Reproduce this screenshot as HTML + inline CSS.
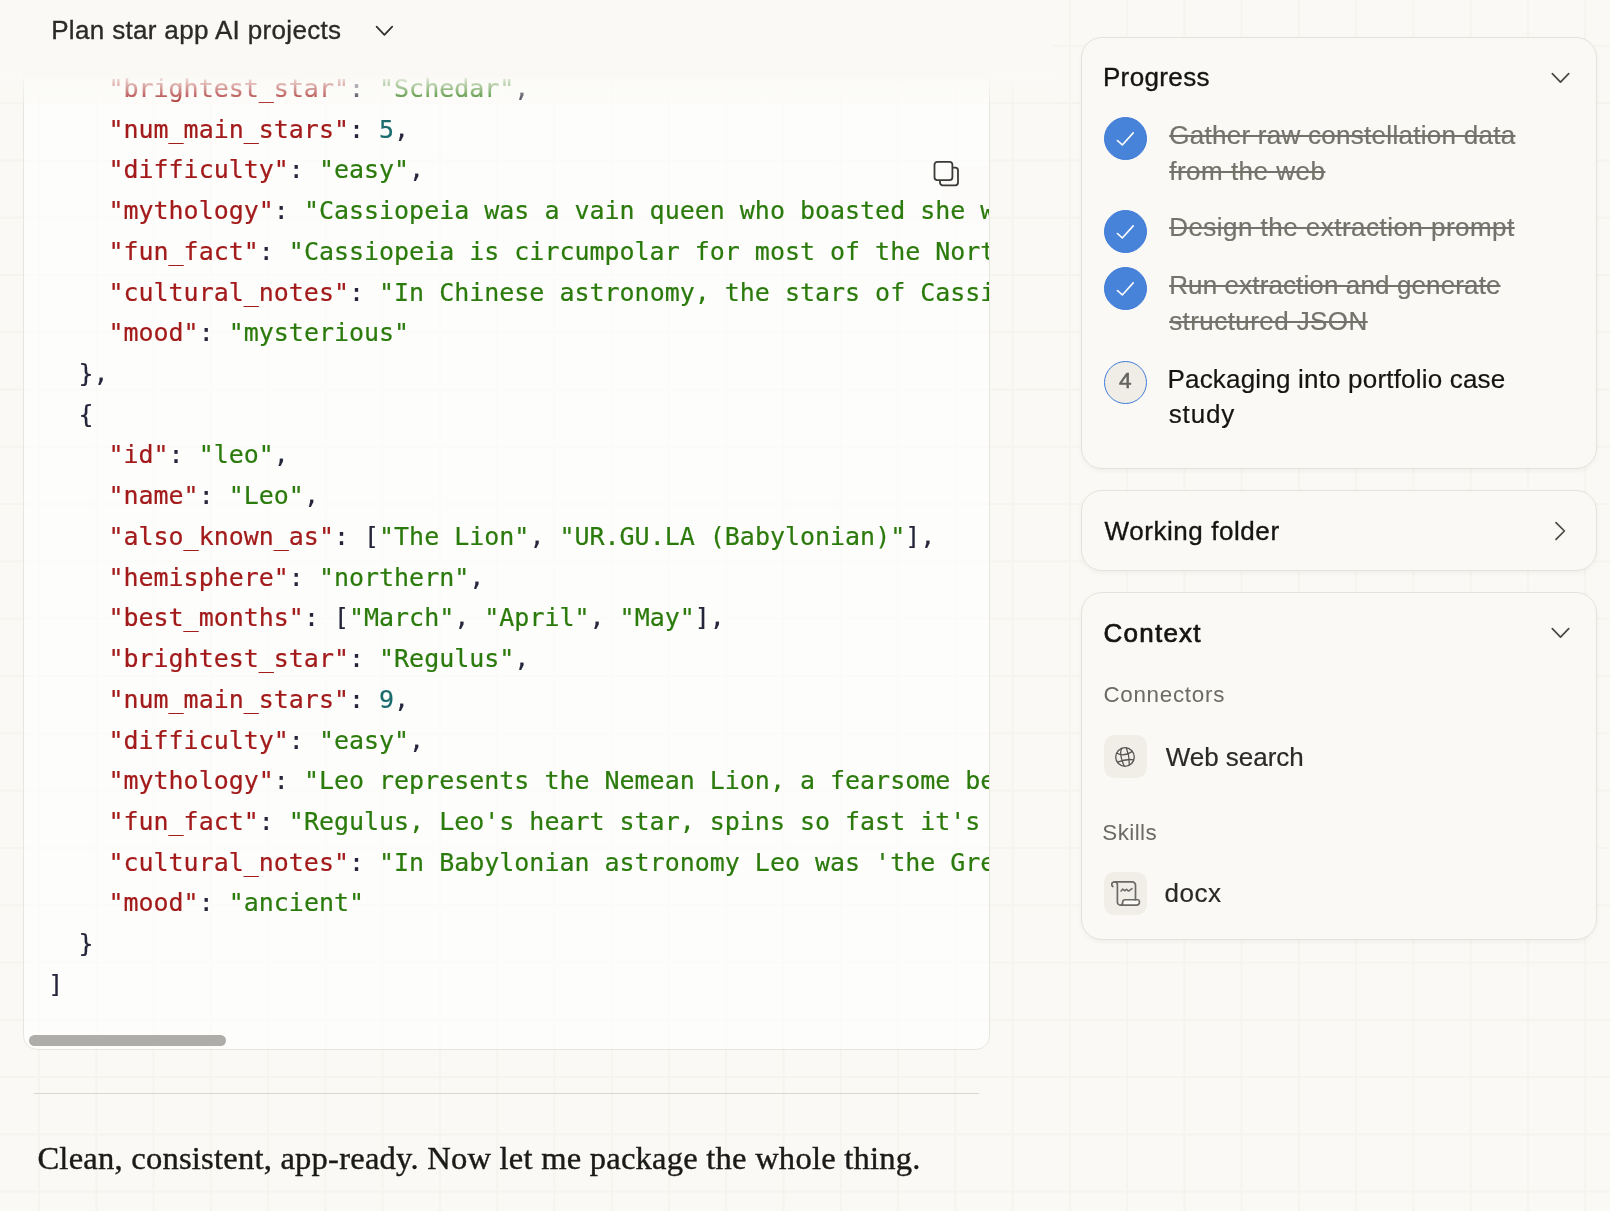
<!DOCTYPE html>
<html lang="en">
<head>
<meta charset="utf-8">
<title>Plan star app AI projects</title>
<style>
*{box-sizing:border-box;margin:0;padding:0}
html,body{width:1610px;height:1211px;overflow:hidden}
body{
  position:relative;
  background-color:#faf9f5;
  background-image:
    linear-gradient(to right,#f5f4ee 0,#f5f4ee 1.6px,transparent 1.6px),
    linear-gradient(to bottom,#f5f4ee 0,#f5f4ee 1.6px,transparent 1.6px);
  background-size:57.28px 57.3px;
  background-position:38.1px 44.75px;
  font-family:"Liberation Sans",sans-serif;
  color:#141413;
  -webkit-font-smoothing:antialiased;
}
.abs{position:absolute}
.t{position:absolute;white-space:nowrap}
#root{position:absolute;left:0;top:0;width:1610px;height:1211px;will-change:transform}

/* ---------- code block ---------- */
#code{
  position:absolute;left:23px;top:20px;width:967px;height:1030px;
  border:1.3px solid #e6e5e0;border-radius:14px;
  background:rgba(255,255,255,.62);
  overflow:hidden;
}
#code pre{
  position:absolute;left:24.3px;top:48px;
  font-family:"DejaVu Sans Mono","Liberation Mono",monospace;
  font-size:24.98px;line-height:40.72px;
  color:#24253a;
  white-space:pre;
  -webkit-text-stroke-width:.22px;
}
.k{color:#a21a1a}
.s{color:#2b7a0c}
.n{color:#1a6b6e}
.p{color:#24253a}
#sb{position:absolute;left:29.4px;top:1035.2px;width:197px;height:10.6px;border-radius:6px;background:#aeadaa}
#copybtn{position:absolute;left:918px;top:145px;width:57px;height:57px;border-radius:11px;background:#fcfbf9}
#copy{position:absolute;left:930px;top:157px;width:32px;height:32px}

/* ---------- header ---------- */
#hdr{position:absolute;left:0;top:0;width:1053px;height:73.6px;background:#faf9f5}
#hdrfade{position:absolute;left:0;top:73.6px;width:1053px;height:33px;background:linear-gradient(to bottom,#faf9f5 0%,rgba(250,249,245,0) 100%)}
#title{left:52px;top:12.2px;font-size:26px;line-height:36px;color:#2a2a27;-webkit-text-stroke:.35px #2a2a27}

/* ---------- bottom ---------- */
#hr{position:absolute;left:34px;top:1092.8px;width:945px;height:1.6px;background:#d9d7d0}
#msg{left:37.5px;top:1135.2px;font-family:"Liberation Serif",serif;font-size:32.6px;line-height:46px;color:#1a1a18;-webkit-text-stroke:.4px #1a1a18}

/* ---------- right cards ---------- */
.card{position:absolute;left:1081.3px;width:516.2px;border:1.5px solid #e3e2dc;border-radius:21px;background:#faf9f5;
  box-shadow:0 2px 5px rgba(0,0,0,.045)}
.h{font-size:26px;line-height:36px;color:#141413;-webkit-text-stroke:.35px #141413}
.body{font-size:26px;line-height:35.8px;-webkit-text-stroke-width:.2px}
.done{color:#74736b;text-decoration:line-through;text-decoration-thickness:1.6px}
.lbl{font-size:22.4px;line-height:30px;color:#6b6a64}
.ck{position:absolute;left:1103.8px;width:43px;height:43px;border-radius:50%;background:#4783d9;border:1.6px solid #3d7ad8}
.ck svg{position:absolute;left:-1.6px;top:-1.6px;width:43px;height:43px}
.num{position:absolute;left:1103.8px;width:43px;height:43px;border-radius:50%;background:#efede5;border:1.9px solid #3f7bd9;
  font-size:22.6px;color:#656460;-webkit-text-stroke:.55px #656460;text-align:center;line-height:38.6px}
.ib{position:absolute;left:1103.8px;width:43px;height:43px;border-radius:10.5px;background:#f0eee7}
.chev{position:absolute}
#title{letter-spacing:0.336px;margin-left:-0.82px}
#t_progress{letter-spacing:0.374px;margin-left:-1.49px}
#t_g1{letter-spacing:0.279px;margin-left:-0.23px}
#t_g2{letter-spacing:0.497px;margin-left:-0.23px}
#t_d1{letter-spacing:0.469px;margin-left:-0.23px}
#t_r1{letter-spacing:0.122px;margin-left:-0.23px}
#t_r2{letter-spacing:0.424px;margin-left:-0.23px}
#t_p1{letter-spacing:0.189px;margin-left:-1.91px}
#t_p2{letter-spacing:0.888px;margin-left:-0.76px}
#t_wf{letter-spacing:0.568px;margin-left:0.14px}
#t_ctx{letter-spacing:1.232px;margin-left:-0.82px}
#t_conn{letter-spacing:0.715px;margin-left:-0.81px}
#t_web{letter-spacing:-0.034px;margin-left:0.41px}
#t_sk{letter-spacing:0.405px;margin-left:-1.88px}
#t_docx{letter-spacing:0.508px;margin-left:-0.64px}
#msg{letter-spacing:0.217px;margin-left:-0.08px}
</style>
</head>
<body>
<div id="root">

<!-- code block -->
<div id="code">
<div id="copybtn"></div>
<pre>    <span class="k">"brightest_star"</span><span class="p">: </span><span class="s">"Schedar"</span><span class="p">,</span>
    <span class="k">"num_main_stars"</span><span class="p">: </span><span class="n">5</span><span class="p">,</span>
    <span class="k">"difficulty"</span><span class="p">: </span><span class="s">"easy"</span><span class="p">,</span>
    <span class="k">"mythology"</span><span class="p">: </span><span class="s">"Cassiopeia was a vain queen who boasted she was more beautiful than the Nereids, angering Poseidon."</span><span class="p">,</span>
    <span class="k">"fun_fact"</span><span class="p">: </span><span class="s">"Cassiopeia is circumpolar for most of the Northern Hemisphere, so it never sets below the horizon."</span><span class="p">,</span>
    <span class="k">"cultural_notes"</span><span class="p">: </span><span class="s">"In Chinese astronomy, the stars of Cassiopeia are split among several asterisms."</span><span class="p">,</span>
    <span class="k">"mood"</span><span class="p">: </span><span class="s">"mysterious"</span>
  <span class="p">},</span>
  <span class="p">{</span>
    <span class="k">"id"</span><span class="p">: </span><span class="s">"leo"</span><span class="p">,</span>
    <span class="k">"name"</span><span class="p">: </span><span class="s">"Leo"</span><span class="p">,</span>
    <span class="k">"also_known_as"</span><span class="p">: [</span><span class="s">"The Lion"</span><span class="p">, </span><span class="s">"UR.GU.LA (Babylonian)"</span><span class="p">],</span>
    <span class="k">"hemisphere"</span><span class="p">: </span><span class="s">"northern"</span><span class="p">,</span>
    <span class="k">"best_months"</span><span class="p">: [</span><span class="s">"March"</span><span class="p">, </span><span class="s">"April"</span><span class="p">, </span><span class="s">"May"</span><span class="p">],</span>
    <span class="k">"brightest_star"</span><span class="p">: </span><span class="s">"Regulus"</span><span class="p">,</span>
    <span class="k">"num_main_stars"</span><span class="p">: </span><span class="n">9</span><span class="p">,</span>
    <span class="k">"difficulty"</span><span class="p">: </span><span class="s">"easy"</span><span class="p">,</span>
    <span class="k">"mythology"</span><span class="p">: </span><span class="s">"Leo represents the Nemean Lion, a fearsome beast slain by Heracles as the first of his labours."</span><span class="p">,</span>
    <span class="k">"fun_fact"</span><span class="p">: </span><span class="s">"Regulus, Leo's heart star, spins so fast it's flattened into an oblate shape."</span><span class="p">,</span>
    <span class="k">"cultural_notes"</span><span class="p">: </span><span class="s">"In Babylonian astronomy Leo was 'the Great Lion', UR.GU.LA."</span><span class="p">,</span>
    <span class="k">"mood"</span><span class="p">: </span><span class="s">"ancient"</span>
  <span class="p">}</span>
<span class="p">]</span></pre>
</div>
<svg id="copy" viewBox="0 0 32 32" fill="none" stroke="#3a3a36" stroke-width="1.8" stroke-linejoin="round" stroke-linecap="round">
  <path d="M10 24 v1.6 a2.7 2.7 0 0 0 2.7 2.7 h12.6 a2.7 2.7 0 0 0 2.7 -2.7 v-12.2 a2.7 2.7 0 0 0 -2.7 -2.7 h-2.3"/>
  <rect x="4.5" y="4.8" width="17.9" height="18.4" rx="2.9"/>
</svg>
<div id="sb"></div>

<!-- header -->
<div id="hdr"></div>
<div id="hdrfade"></div>
<div id="title" class="t">Plan star app AI projects</div>
<svg class="chev" style="left:374px;top:22px;width:21px;height:18px" viewBox="0 0 21 18" fill="none" stroke="#2f2f2c" stroke-width="1.7" stroke-linecap="round" stroke-linejoin="round"><path d="M2.6 4.6 L10.4 12.8 L18.2 4.6"/></svg>

<!-- bottom -->
<div id="hr"></div>
<div id="msg" class="t">Clean, consistent, app-ready. Now let me package the whole thing.</div>

<!-- Progress card -->
<div class="card" style="top:36.95px;height:432px"></div>
<div class="t h" id="t_progress" style="left:1104.4px;top:59.1px">Progress</div>
<svg class="chev" style="left:1550px;top:68.5px;width:21px;height:18px" viewBox="0 0 21 18" fill="none" stroke="#4a4944" stroke-width="1.7" stroke-linecap="round" stroke-linejoin="round"><path d="M2.3 4.6 L10.5 13.2 L18.7 4.6"/></svg>

<div class="ck" style="top:117.3px"><svg viewBox="0 0 43 43" fill="none" stroke="#fff" stroke-width="1.6" stroke-linecap="round" stroke-linejoin="round"><path d="M14.4 23.5 L19.3 27.95 L30.2 15.85"/></svg></div>
<div class="t body done" id="t_g1" style="left:1169.4px;top:118.2px">Gather raw constellation data</div>
<div class="t body done" id="t_g2" style="left:1169.4px;top:153.5px">from the web</div>

<div class="ck" style="top:210.2px"><svg viewBox="0 0 43 43" fill="none" stroke="#fff" stroke-width="1.6" stroke-linecap="round" stroke-linejoin="round"><path d="M14.4 23.5 L19.3 27.95 L30.2 15.85"/></svg></div>
<div class="t body done" id="t_d1" style="left:1169.4px;top:210.1px">Design the extraction prompt</div>

<div class="ck" style="top:267.4px"><svg viewBox="0 0 43 43" fill="none" stroke="#fff" stroke-width="1.6" stroke-linecap="round" stroke-linejoin="round"><path d="M14.4 23.5 L19.3 27.95 L30.2 15.85"/></svg></div>
<div class="t body done" id="t_r1" style="left:1169.4px;top:267.5px">Run extraction and generate</div>
<div class="t body done" id="t_r2" style="left:1169.4px;top:303.6px">structured JSON</div>

<div class="num" style="top:360.8px">4</div>
<div class="t body" id="t_p1" style="left:1169.4px;top:361.5px">Packaging into portfolio case</div>
<div class="t body" id="t_p2" style="left:1169.4px;top:396.7px">study</div>

<!-- Working folder card -->
<div class="card" style="top:490.15px;height:81.2px"></div>
<div class="t h" id="t_wf" style="left:1104.4px;top:512.9px">Working folder</div>
<svg class="chev" style="left:1551px;top:520px;width:18px;height:22px" viewBox="0 0 18 22" fill="none" stroke="#4a4944" stroke-width="1.7" stroke-linecap="round" stroke-linejoin="round"><path d="M5 2.6 L13.4 11 L5 19.4"/></svg>

<!-- Context card -->
<div class="card" style="top:592.1px;height:348px"></div>
<div class="t h" id="t_ctx" style="left:1104.4px;top:614.6px;-webkit-text-stroke:.7px #141413">Context</div>
<svg class="chev" style="left:1550px;top:624px;width:21px;height:18px" viewBox="0 0 21 18" fill="none" stroke="#4a4944" stroke-width="1.7" stroke-linecap="round" stroke-linejoin="round"><path d="M2.3 4.6 L10.5 13.2 L18.7 4.6"/></svg>

<div class="t lbl" id="t_conn" style="left:1104.2px;top:679.8px">Connectors</div>
<div class="ib" style="top:735.2px">
  <svg style="position:absolute;left:10.4px;top:10.6px;width:22px;height:22px" viewBox="0 0 22 22" fill="none" stroke="#55544f" stroke-width="1.3" stroke-linecap="round"><circle cx="11" cy="11" r="9.3"/><path d="M7.75 2.35 Q4.7 7.6 10.05 19.65"/><path d="M12.4 1.9 Q15.6 10 15.2 19.2"/><path d="M3.1 7.3 Q9.45 11.05 18.4 5.4"/><path d="M3.55 16.1 Q12.3 12.65 19.4 13.8"/></svg>
</div>
<div class="t body" id="t_web" style="left:1165.4px;top:739.5px;color:#2a2a27">Web search</div>

<div class="t lbl" id="t_sk" style="left:1104.2px;top:817.7px">Skills</div>
<div class="ib" style="top:872.2px">
  <svg style="position:absolute;left:0;top:0;width:43px;height:43px" viewBox="0 0 43 43" fill="none" stroke="#6a6963" stroke-width="1.7" stroke-linecap="round" stroke-linejoin="round"><path d="M21.2 27.75 H34 C35.8 27.75 36 33.1 32.4 33.1 H16.3 C17.8 33.1 18.7 31.9 18.7 30.3 C18.7 28.8 19.6 27.75 21.2 27.75Z" fill="#fcfbf8" stroke="none"/><path d="M8.9 14.6 C7.1 13.4 7.2 9.9 10.8 9.9 H28.2 a3.3 3.3 0 0 1 3.3 3.3 V27.7"/><path d="M10.8 9.9 C12.6 9.9 13.4 11.2 13.4 12.8 V30.2 a2.9 2.9 0 0 0 2.9 2.9 H32.4 C34.6 33.1 35.6 31.6 35.4 29.6 C35.3 28.4 34.9 27.75 34 27.75 H21.2 C19.6 27.75 18.7 28.8 18.7 30.3 C18.7 31.9 17.8 33.1 16.3 33.1"/><path d="M17.1 19.1 L18.8 17.1 L20.6 18.8 L22.5 17.3 L24.5 19.1 L28 16.6" stroke-width="1.5"/></svg>
</div>
<div class="t body" id="t_docx" style="left:1165.2px;top:876.1px;color:#2a2a27">docx</div>

</div>
</body>
</html>
